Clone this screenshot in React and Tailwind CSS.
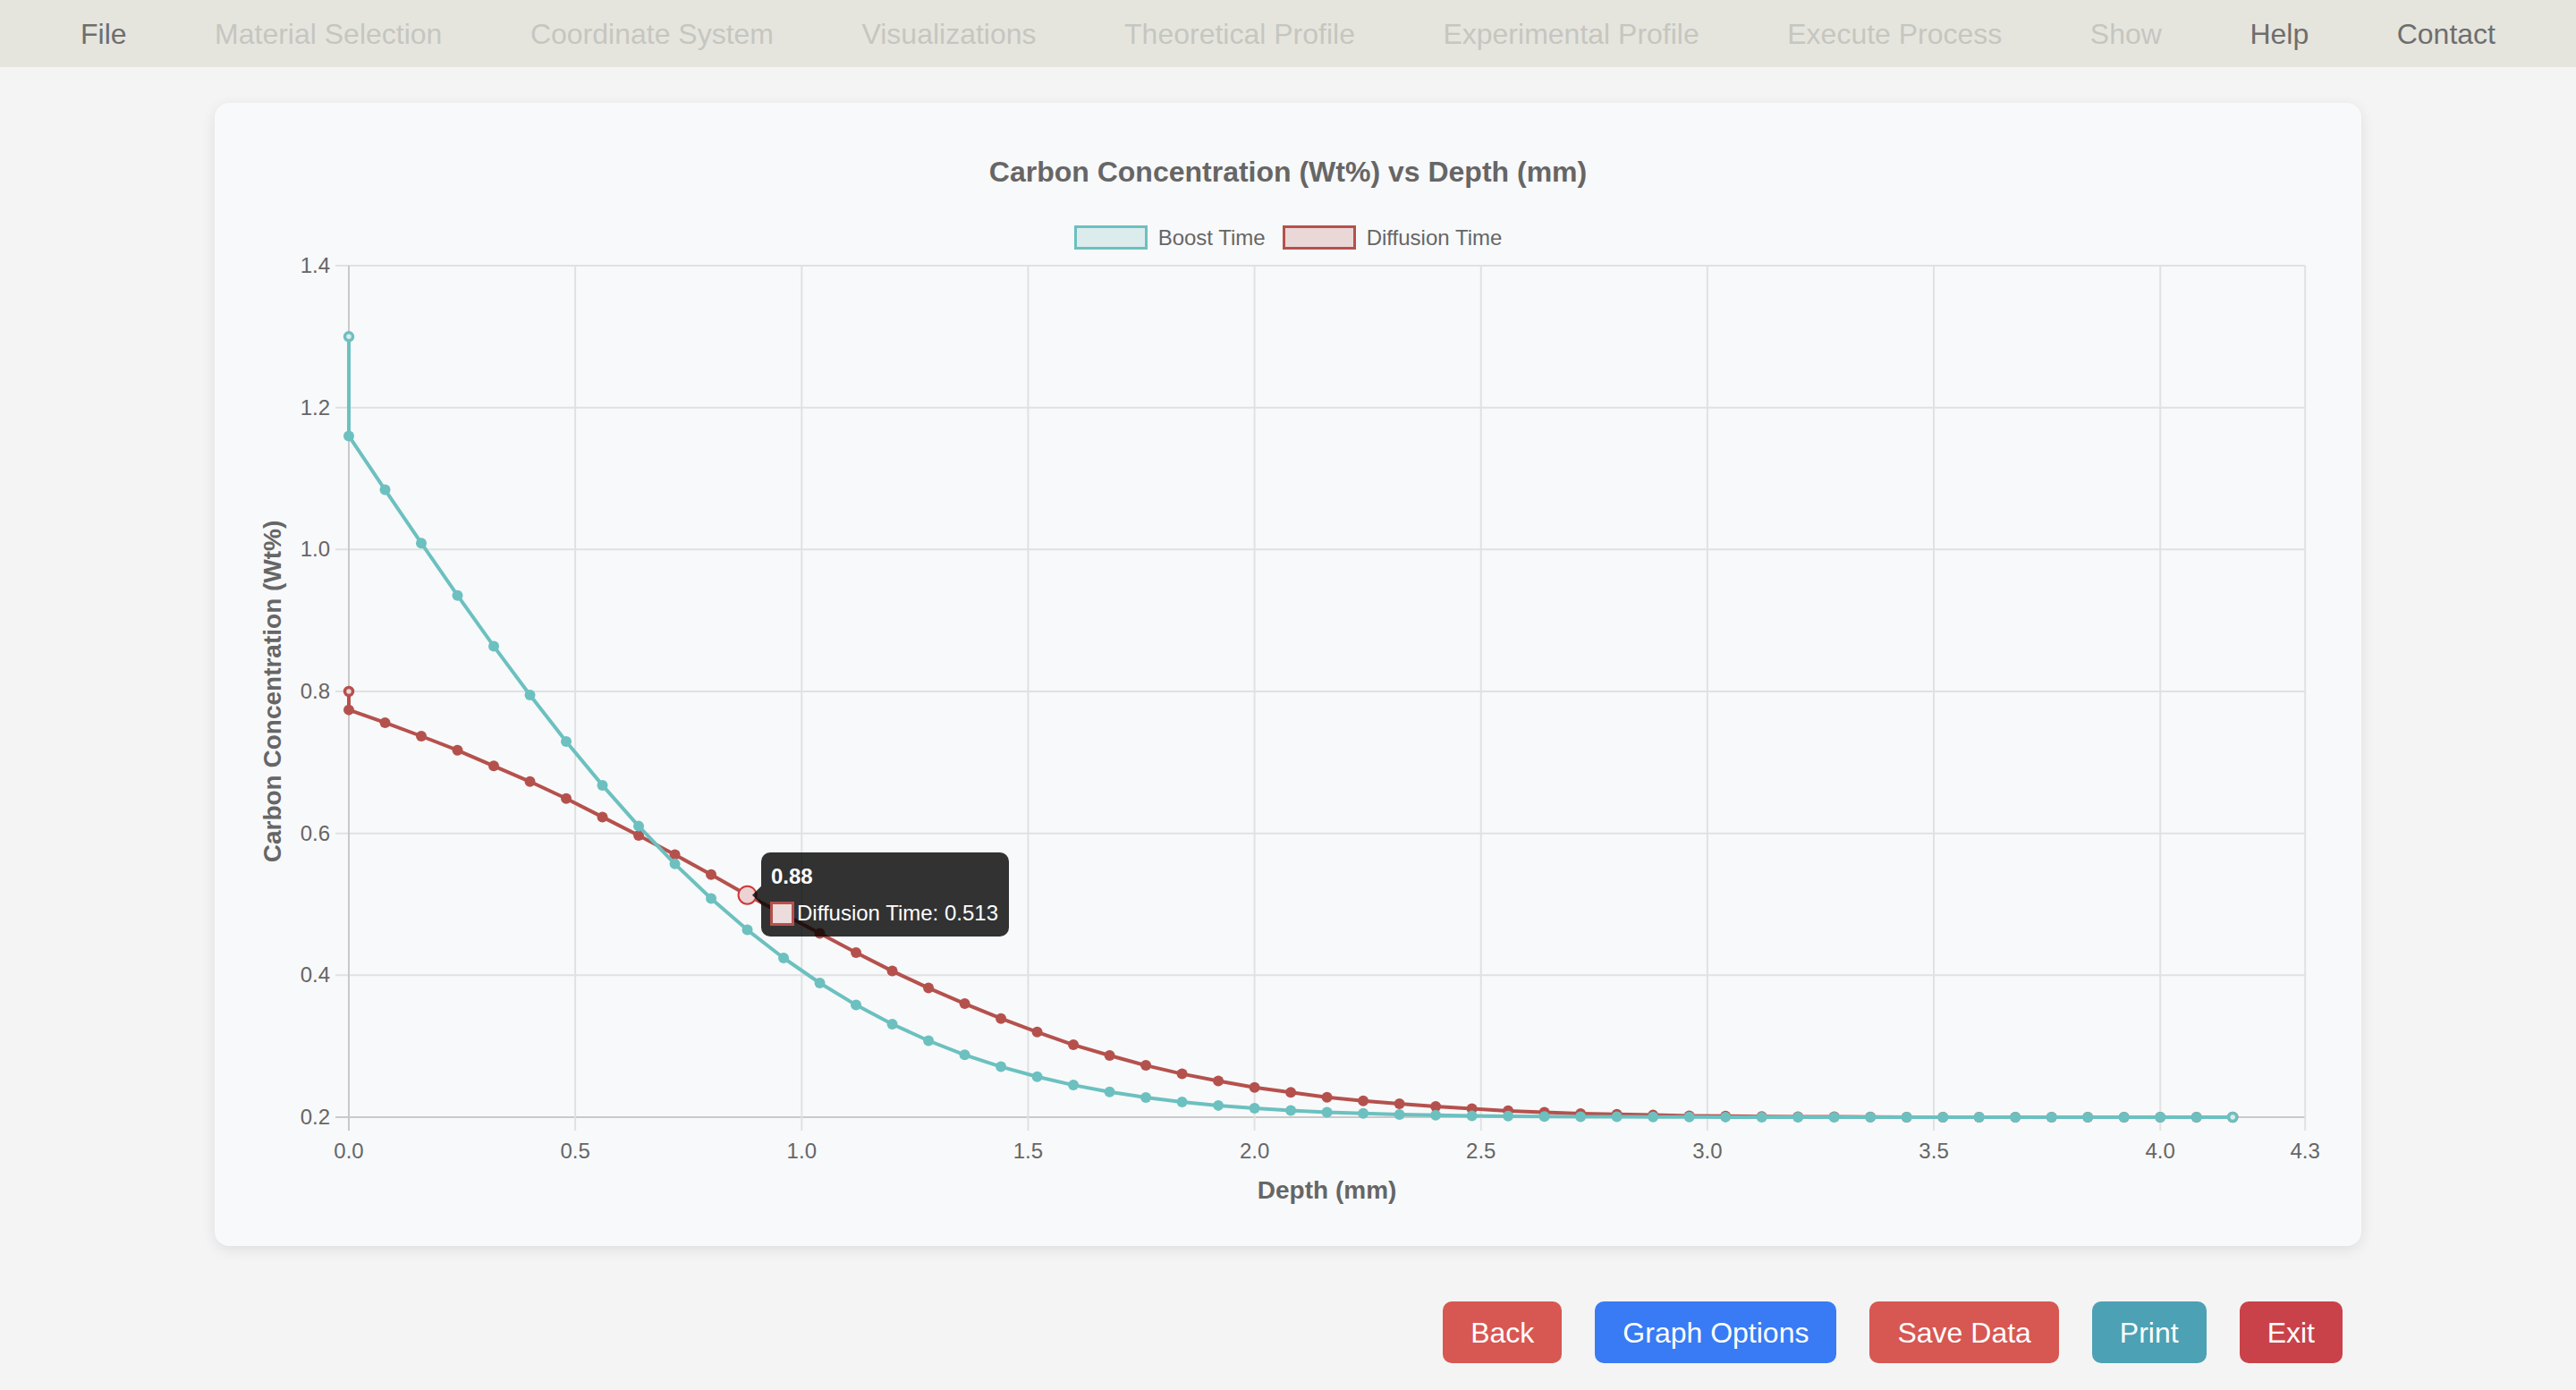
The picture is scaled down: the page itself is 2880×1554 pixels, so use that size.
import React from 'react';

const TEAL = '#6cc0c0';
const TEAL_FILL = '#dcecec';
const RED = '#b5514d';
const RED_FILL = '#ead8d8';

const NAV = [
  { label: 'File', on: true },
  { label: 'Material Selection' },
  { label: 'Coordinate System' },
  { label: 'Visualizations' },
  { label: 'Theoretical Profile' },
  { label: 'Experimental Profile' },
  { label: 'Execute Process' },
  { label: 'Show' },
  { label: 'Help', on: true },
  { label: 'Contact', on: true },
];

// plot mapping (svg coords)
const X = (v) => 150 + v * 506.3;
const Y = (c) => 969 - (c - 0.2) * 793.33;

function erf(x) {
  const t = 1 / (1 + 0.3275911 * x);
  return 1 - (((((1.061405429 * t - 1.453152027) * t) + 1.421413741) * t - 0.284496736) * t + 0.254829592) * t * Math.exp(-x * x);
}

const steps = Array.from({ length: 53 }, (_, i) => +(i * 0.08).toFixed(2));

const boost = [[0, 1.3], ...steps.map((x) => [x, 0.2 + 0.96 * (1 - erf(x / 1.14))])];

const diffVals = [
  0.774, 0.756, 0.737, 0.717, 0.695, 0.673, 0.649, 0.623, 0.597, 0.57, 0.542, 0.513, 0.486,
  0.459, 0.432, 0.406, 0.382, 0.36, 0.339, 0.32, 0.302, 0.287, 0.273, 0.261, 0.251, 0.242,
  0.235, 0.228, 0.223, 0.219, 0.215, 0.212, 0.209, 0.207, 0.205, 0.204, 0.203, 0.202, 0.2015,
  0.201, 0.2007, 0.2005, 0.2003,
];
const diffusion = [[0, 0.8], ...steps.map((x, i) => [x, diffVals[i] ?? 0.2])];

const yTicks = [0.2, 0.4, 0.6, 0.8, 1.0, 1.2, 1.4];
const xTicks = [0, 0.5, 1, 1.5, 2, 2.5, 3, 3.5, 4];

function Series({ data, color, fill }) {
  const pts = data.map(([x, c]) => `${X(x).toFixed(1)},${Y(c).toFixed(1)}`).join(' ');
  const last = data.length - 1;
  return (
    <g>
      <polyline points={pts} fill="none" stroke={color} strokeWidth="4" strokeLinejoin="round" />
      {data.map(([x, c], i) => (
        <circle
          key={i}
          cx={X(x)}
          cy={Y(c)}
          r={i === 0 || i === last ? 4.5 : 6}
          fill={i === 0 || i === last ? fill : color}
          stroke={color}
          strokeWidth={i === 0 || i === last ? 3.5 : 0}
        />
      ))}
    </g>
  );
}

function Chart() {
  return (
    <svg width="2400" height="1080" className="block">
      {/* grid */}
      {yTicks.map((c) => (
        <line key={c} x1="135" x2={X(4.32)} y1={Y(c)} y2={Y(c)} stroke={c === 0.2 ? '#c9c9c9' : '#e0e1e2'} strokeWidth="2" />
      ))}
      {[...xTicks, 4.32].map((v) => (
        <line key={v} x1={X(v)} x2={X(v)} y1={Y(1.4)} y2={Y(0.2) + 15} stroke={v === 0 ? '#c9c9c9' : '#e0e1e2'} strokeWidth="2" />
      ))}

      {/* tick labels */}
      <g fill="#666" fontSize="24">
        {yTicks.map((c) => (
          <text key={c} x="129" y={Y(c) + 8} textAnchor="end">{c.toFixed(1)}</text>
        ))}
        {xTicks.map((v) => (
          <text key={v} x={X(v)} y="1015" textAnchor="middle">{v.toFixed(1)}</text>
        ))}
        <text x={X(4.32)} y="1015" textAnchor="middle">4.3</text>
      </g>

      {/* axis titles */}
      <text transform="translate(64 493) rotate(-90)" y="10" textAnchor="middle" fontSize="28" fontWeight="bold" fill="#666">
        Carbon Concentration (Wt%)
      </text>
      <text x={(X(0) + X(4.32)) / 2} y="1060" textAnchor="middle" fontSize="28" fontWeight="bold" fill="#666">
        Depth (mm)
      </text>

      <Series data={diffusion} color={RED} fill={RED_FILL} />
      <Series data={boost} color={TEAL} fill={TEAL_FILL} />

      {/* hovered point + tooltip caret */}
      <circle cx={X(0.88)} cy={Y(0.513)} r="10" fill="#ecd2d2" stroke="#cc3b3b" strokeWidth="2" />
      <polygon points={`601,${Y(0.513)} 611,${Y(0.513) - 10} 611,${Y(0.513) + 10}`} fill="rgba(0,0,0,0.8)" />
    </svg>
  );
}

function LegendItem({ label, color, fill }) {
  return (
    <div className="flex items-center gap-[12px]">
      <span className="w-[82px] h-[27px] border-[3px]" style={{ borderColor: color, backgroundColor: fill }} />
      <span className="text-[24px] leading-[27px] text-[#666]">{label}</span>
    </div>
  );
}

const BUTTONS = [
  { label: 'Back', cls: 'bg-[#d75752]' },
  { label: 'Graph Options', cls: 'bg-[#387bf5]' },
  { label: 'Save Data', cls: 'bg-[#d75752]' },
  { label: 'Print', cls: 'bg-[#4ca1b5]' },
  { label: 'Exit', cls: 'bg-[#c9424a]' },
];

export default function App() {
  return (
    <div className="min-h-screen bg-[#f4f4f4] font-['Liberation_Sans',Arial,sans-serif]">
      <nav className="h-[75px] bg-[#e5e5de] flex items-center justify-between px-[90px]">
        {NAV.map((n) => (
          <span key={n.label} className={`text-[32px] leading-[38px] ${n.on ? 'text-[#6e6e6e]' : 'text-[#c6c6c0]'}`}>
            {n.label}
          </span>
        ))}
      </nav>

      <main className="pt-[40px]">
        <div className="relative mx-auto w-[2400px] h-[1278px] rounded-[16px] bg-[#f8f9fa] shadow-[0_4px_16px_rgba(0,0,0,0.09)]">
          <h2 className="pt-[58px] text-center text-[32px] leading-[38px] font-bold text-[#666]">
            Carbon Concentration (Wt%) vs Depth (mm)
          </h2>
          <div className="mt-[41px] flex justify-center items-center gap-[19px]">
            <LegendItem label="Boost Time" color={TEAL} fill={TEAL_FILL} />
            <LegendItem label="Diffusion Time" color={RED} fill={RED_FILL} />
          </div>
          <div className="mt-[1px]">
            <Chart />
          </div>

          <div className="absolute left-[611px] top-[838px] w-[277px] h-[94px] rounded-[10px] bg-[rgba(0,0,0,0.8)] px-[10px] pt-[13px] text-white">
            <div className="text-[24px] leading-[28px] font-bold pl-[1px]">0.88</div>
            <div className="mt-[13px] flex items-center gap-[3px]">
              <span className="w-[27px] h-[27px] border-[3px] border-[#b5514d] bg-[#ecdcdc]" />
              <span className="text-[24px] leading-[28px]">Diffusion Time: 0.513</span>
            </div>
          </div>
        </div>

        <div className="mt-[62px] flex justify-end gap-[37px] pr-[261px]">
          {BUTTONS.map((b) => (
            <button key={b.label} className={`${b.cls} h-[69px] px-[31px] rounded-[10px] text-white text-[32px] leading-[38px]`}>
              {b.label}
            </button>
          ))}
        </div>
      </main>
    </div>
  );
}
